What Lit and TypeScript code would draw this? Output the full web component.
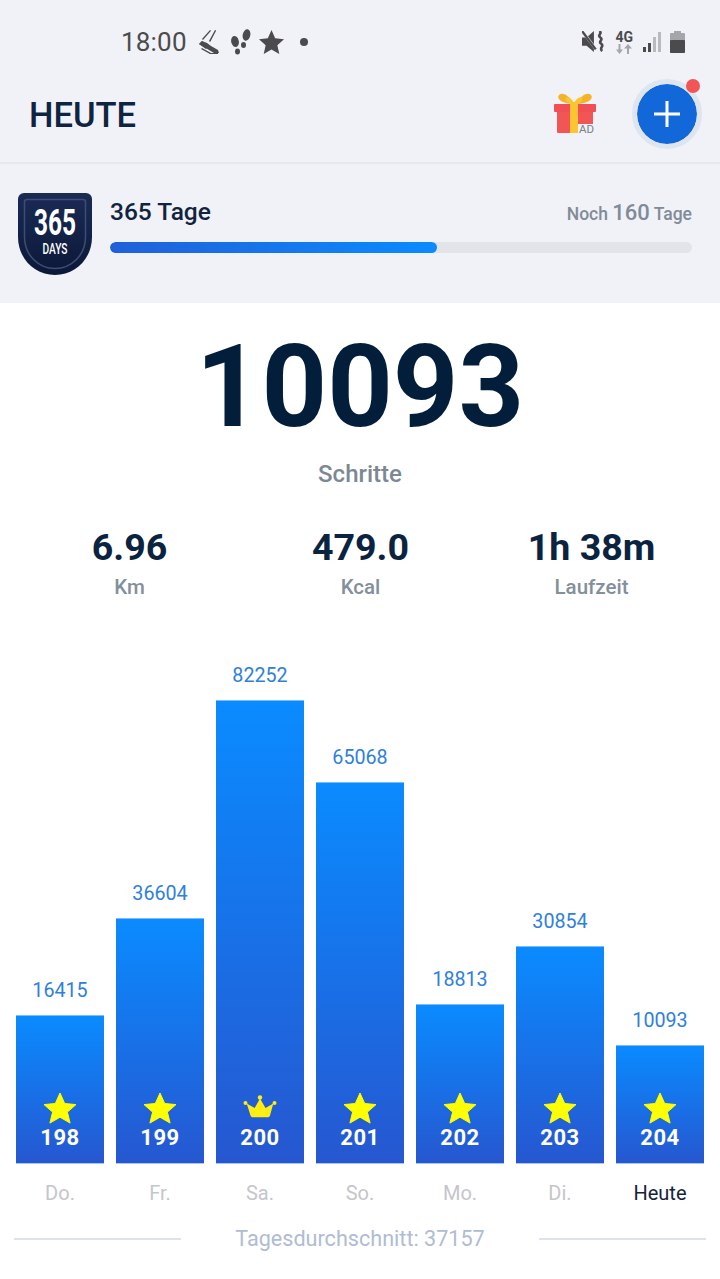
import { LitElement, html, css, svg } from 'lit';
import { customElement } from 'lit/decorators.js';

interface Day {
  value: number;
  height: number;
  count: number;
  label: string;
  crown?: boolean;
  today?: boolean;
}

const days: Day[] = [
  { value: 16415, height: 149, count: 198, label: 'Do.' },
  { value: 36604, height: 246, count: 199, label: 'Fr.' },
  { value: 82252, height: 464, count: 200, label: 'Sa.', crown: true },
  { value: 65068, height: 382, count: 201, label: 'So.' },
  { value: 18813, height: 160, count: 202, label: 'Mo.' },
  { value: 30854, height: 218, count: 203, label: 'Di.' },
  { value: 10093, height: 119, count: 204, label: 'Heute', today: true },
];

const stats = [
  { value: '6.96', label: 'Km' },
  { value: '479.0', label: 'Kcal' },
  { value: '1h 38m', label: 'Laufzeit' },
];

const star = svg`<svg class="prize" width="34" height="33" viewBox="0 0 34 33"><path d="M17 1l4.700 10.500 11.300 1.100-8.600 7.500 2.700 11-10.100-5.900-10.100 5.900 2.700-11L1 12.600l11.300-1.100z" fill="#ffff00" stroke="#ffff00" stroke-linejoin="round"/></svg>`;

const crown = svg`<svg class="prize" width="34" height="33" viewBox="0 0 34 33"><g fill="#ffee12"><circle cx="17" cy="5.500" r="2.200"/><circle cx="2.500" cy="11" r="2"/><circle cx="31.500" cy="11" r="2"/><path d="M17 6.500l5.500 9.500 7.800-4.500-3.300 12c-.3 1.200-1.200 1.800-2.500 1.800H10c-1.300 0-2.200-.6-2.500-1.800l-3.800-12 8 4.500z"/></g></svg>`;

@customElement('app-root')
export class AppRoot extends LitElement {
  static styles = css`
    :host {
      display: block;
      width: 720px;
      height: 1279px;
      overflow: hidden;
      background: #fff;
      font-family: Roboto, 'Liberation Sans', sans-serif;
    }

    .top {
      background: #f0f2f7;
      height: 303px;
    }

    .status {
      height: 84px;
      box-sizing: border-box;
      padding: 0 35px 0 121px;
      display: flex;
      align-items: center;
      color: #4b4b4d;
    }

    .time {
      font-size: 26px;
      letter-spacing: 0.2px;
      margin-right: 4px;
    }

    .status-left {
      display: flex;
      align-items: center;
      gap: 8px;
      flex: 1;
    }

    .status-right {
      display: flex;
      align-items: center;
    }

    .fourg {
      display: flex;
      flex-direction: column;
      align-items: center;
      margin: 0 10px 0 11px;
      font-size: 14px;
      font-weight: 700;
      line-height: 13px;
    }

    .header {
      height: 80px;
      box-sizing: border-box;
      padding: 0 18px 18px 29px;
      display: flex;
      align-items: center;
      border-bottom: 2px solid #e6e8ed;
    }

    .title {
      flex: 1;
      padding-top: 2px;
      font-size: 34.500px;
      font-weight: 500;
      color: #0e2440;
    }

    .gift {
      margin-right: 36px;
    }

    .add {
      position: relative;
      width: 70px;
      height: 70px;
      box-sizing: border-box;
      border-radius: 50%;
      background: #1368d9;
      background-clip: padding-box;
      border: 5px solid #dfe5ee;
      display: flex;
      align-items: center;
      justify-content: center;
    }

    .dot {
      position: absolute;
      top: -5px;
      right: -3px;
      width: 14px;
      height: 14px;
      border-radius: 50%;
      background: #f25555;
    }

    .streak {
      display: flex;
      padding: 29px 28px 0 18px;
    }

    .badge {
      margin-right: 18px;
      flex: none;
    }

    .streak-body {
      flex: 1;
    }

    .streak-head {
      display: flex;
      justify-content: space-between;
      align-items: baseline;
      height: 36px;
      line-height: 38px;
    }

    .streak-name {
      font-size: 24.500px;
      font-weight: 500;
      color: #10243e;
    }

    .streak-left {
      font-size: 17.500px;
      font-weight: 500;
      color: #818b98;
    }

    .streak-left b {
      font-size: 22px;
      font-weight: 500;
    }

    .track {
      margin-top: 13px;
      height: 11px;
      border-radius: 6px;
      background: #e3e4e8;
      overflow: hidden;
    }

    .fill {
      height: 100%;
      border-radius: 6px;
      background: linear-gradient(90deg, #2160d8, #0a8bff);
    }

    .steps {
      text-align: center;
      font-size: 114.500px;
      font-weight: 700;
      line-height: 134px;
      margin-top: 17px;
      color: #021e3b;
    }

    .steps-label {
      text-align: center;
      font-size: 24px;
      font-weight: 500;
      line-height: 28px;
      color: #7c8894;
      margin-top: 6px;
    }

    .stats {
      display: grid;
      grid-template-columns: repeat(3, 1fr);
      padding: 0 13px 0 14px;
      margin-top: 37px;
      text-align: center;
    }

    .stat-value {
      font-size: 37.600px;
      font-weight: 700;
      line-height: 44px;
      color: #0a2340;
    }

    .stat-label {
      font-size: 20.500px;
      font-weight: 500;
      line-height: 24px;
      margin-top: 6px;
      color: #838f9c;
    }

    .chart {
      height: 565px;
      padding: 0 16px;
      display: flex;
      align-items: flex-end;
      gap: 12px;
    }

    .col {
      width: 88px;
      text-align: center;
    }

    .bar-value {
      font-size: 19.700px;
      font-weight: 450;
      line-height: 24px;
      margin-bottom: 12px;
      color: #2e80dc;
    }

    .bar {
      box-sizing: border-box;
      background: linear-gradient(180deg, #0a8bff, #2657d0);
      border-bottom: 1px solid #a9c6f2;
      border-top: 1px solid #7bbcff;
      display: flex;
      flex-direction: column;
      justify-content: flex-end;
      align-items: center;
      padding-bottom: 12px;
    }

    .prize {
      display: block;
    }

    .count {
      font-size: 22px;
      font-weight: 700;
      line-height: 26px;
      letter-spacing: 0.5px;
      color: #fff;
    }

    .days {
      display: flex;
      gap: 12px;
      padding: 0 16px;
      margin-top: 16px;
    }

    .day {
      width: 88px;
      text-align: center;
      font-size: 20px;
      line-height: 26px;
      color: #c4c6ca;
    }

    .day.today {
      font-weight: 450;
      color: #14233a;
    }

    .average {
      display: flex;
      align-items: center;
      padding: 0 14px;
      margin-top: 19px;
      font-size: 21.600px;
      line-height: 28px;
      color: #b0bcd2;
    }

    .average span {
      flex: none;
      width: 358px;
      text-align: center;
    }

    .average i {
      flex: 1;
      height: 2px;
      background: #dce3ef;
    }
  `;

  private renderBadge() {
    return html`<svg class="badge" width="74" height="82" viewBox="0 0 74 82">
      <defs>
        <linearGradient id="shield" x1="0" y1="0" x2="0" y2="1">
          <stop offset="0" stop-color="#1a2b54" />
          <stop offset="1" stop-color="#0c1838" />
        </linearGradient>
      </defs>
      <path d="M6 0h62a6 6 0 0 1 6 6v38c0 22-17 38-37 38S0 66 0 44V6a6 6 0 0 1 6-6z" fill="url(#shield)" />
      <path d="M9 6.500h56a2.500 2.500 0 0 1 2.500 2.500v35c0 18-14 31.500-30.500 31.500S6.500 62 6.500 44V9A2.500 2.500 0 0 1 9 6.500z" fill="none" stroke="#3d4d78" stroke-width="1.500" />
      <text x="37" y="42" text-anchor="middle" fill="#fff" font-family="Roboto" font-weight="700" font-size="36" textLength="42" lengthAdjust="spacingAndGlyphs">365</text>
      <text x="37" y="61" text-anchor="middle" fill="#fff" font-family="Roboto" font-weight="500" font-size="15" textLength="25" lengthAdjust="spacingAndGlyphs">DAYS</text>
    </svg>`;
  }

  private renderGift() {
    return html`<svg class="gift" width="42" height="42" viewBox="0 0 42 42">
      <path d="M20 11C14 1 8-1 5 2c-3 4 3 9 15 9zM22 11C28 1 34-1 37 2c3 4-3 9-15 9z" fill="#f3b32a" />
      <rect x="3" y="18" width="36" height="22" rx="1" fill="#f25555" />
      <rect x="0" y="11" width="42" height="8" rx="1" fill="#f04f55" />
      <rect x="16" y="9" width="8" height="31" fill="#fbc531" />
      <path d="M20 11C18 5 14 3 12 5c-2 3 3 6 8 6zM20 11c2-6 6-8 8-6 2 3-3 6-8 6z" fill="#fbc531" />
      <rect x="24" y="31" width="18" height="11" fill="#f0f2f7" />
      <text x="25" y="40" font-family="Roboto" font-size="11.500" fill="#7d7f84">AD</text>
    </svg>`;
  }

  private renderStatus() {
    return html`<div class="status">
      <div class="status-left">
        <span class="time">18:00</span>
        <svg width="20" height="24" viewBox="0 0 20 24" fill="#4b4b4d">
          <path d="M0 14l3-3 5 2 4 3 7 4 1 3h-5z" />
          <path d="M0 14l3-3 1 1-2 2 6 4-1 1z" fill="#4b4b4d" />
          <path d="M3 18l9 5h7v1h-8L2 19z" />
          <path d="M3 9l8-9 1 .7-8 9.300zM10 11l6-11 1.200.5-6 11.500z" />
        </svg>
        <svg width="20" height="26" viewBox="0 0 20 26" fill="#4b4b4d" style="margin-left:4px">
          <ellipse cx="4" cy="12.500" rx="3.800" ry="5.600" transform="rotate(-12 4 12.500)" />
          <ellipse cx="6.500" cy="22.500" rx="2.500" ry="3" />
          <ellipse cx="15.500" cy="6" rx="3.800" ry="5.800" transform="rotate(12 15.500 6)" />
          <ellipse cx="12.500" cy="16" rx="2.500" ry="3" />
        </svg>
        <svg width="25" height="25" viewBox="0 0 26 26" fill="#4b4b4d">
          <path d="M13 0l3.800 8.600 9.200 1-6.900 6.200 2 9.200-8.100-4.700L4.900 25l2-9.200L0 9.600l9.200-1z" />
        </svg>
        <svg width="8" height="8" viewBox="0 0 8 8" style="margin-left:8px"><circle cx="4" cy="4" r="4" fill="#4b4b4d" /></svg>
      </div>
      <div class="status-right">
        <svg width="22" height="22" viewBox="0 0 24 24" fill="#4b4b4d">
          <path d="M0 7h5l8-7v23l-8-7H0z" />
          <path d="M1 1l15 20" stroke="#f0f2f7" stroke-width="3" />
          <path d="M0 0l15 20" stroke="#4b4b4d" stroke-width="2.500" />
          <path d="M19 0c4 3-3 4 1 7s-3 4 1 7-3 4 1 8" fill="none" stroke="#4b4b4d" stroke-width="2.800" />
        </svg>
        <div class="fourg">
          <span>4G</span>
          <svg width="16" height="10" viewBox="0 0 16 10" fill="#a5a6a9">
            <path d="M3.500 10L0 5.500h2.500V0h2v5.500H7zM12 0l4 4.500h-3V10h-2V4.500H8z" />
          </svg>
        </div>
        <svg width="18" height="20" viewBox="0 0 18 20">
          <rect x="0" y="15" width="3" height="5" fill="#4b4b4d" />
          <rect x="5" y="11" width="3" height="9" fill="#4b4b4d" />
          <rect x="10" y="5" width="3" height="15" fill="#b9babd" />
          <rect x="15" y="0" width="3" height="20" fill="#b9babd" />
        </svg>
        <svg width="15" height="22" viewBox="0 0 15 22" style="margin-left:9px">
          <rect x="4" y="0" width="7" height="3" fill="#a5a6a9" />
          <rect x="0" y="2" width="15" height="20" rx="1" fill="#a5a6a9" />
          <rect x="0" y="9" width="15" height="13" rx="1" fill="#4b4b4d" />
        </svg>
      </div>
    </div>`;
  }

  render() {
    return html`
      <div class="top">
        ${this.renderStatus()}
        <div class="header">
          <div class="title">HEUTE</div>
          ${this.renderGift()}
          <div class="add">
            <svg width="26" height="26" viewBox="0 0 26 26"><path d="M13 0v26M0 13h26" stroke="#fff" stroke-width="3" /></svg>
            <span class="dot"></span>
          </div>
        </div>
        <div class="streak">
          ${this.renderBadge()}
          <div class="streak-body">
            <div class="streak-head">
              <span class="streak-name">365 Tage</span>
              <span class="streak-left">Noch <b>160</b> Tage</span>
            </div>
            <div class="track"><div class="fill" style="width: ${(327 / 582) * 100}%"></div></div>
          </div>
        </div>
      </div>
      <div class="steps">10093</div>
      <div class="steps-label">Schritte</div>
      <div class="stats">
        ${stats.map(
          (s) => html`<div>
            <div class="stat-value">${s.value}</div>
            <div class="stat-label">${s.label}</div>
          </div>`
        )}
      </div>
      <div class="chart">
        ${days.map(
          (d) => html`<div class="col">
            <div class="bar-value">${d.value}</div>
            <div class="bar" style="height: ${d.height}px">
              ${d.crown ? crown : star}
              <div class="count">${d.count}</div>
            </div>
          </div>`
        )}
      </div>
      <div class="days">
        ${days.map((d) => html`<div class="day ${d.today ? 'today' : ''}">${d.label}</div>`)}
      </div>
      <div class="average">
        <i></i>
        <span>Tagesdurchschnitt: 37157</span>
        <i></i>
      </div>
    `;
  }
}
